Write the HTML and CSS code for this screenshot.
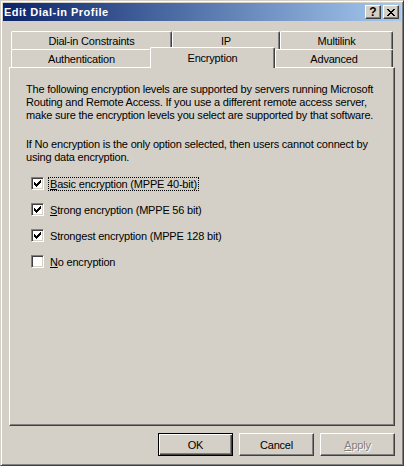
FILE: index.html
```html
<!DOCTYPE html>
<html lang="en">
<head>
    <meta charset="UTF-8">
    <title>Edit Dial-in Profile</title>
    <link rel="stylesheet" href="styles.css">
</head>
<body>

    <div class="window">
        <!-- Title bar -->
        <div class="titlebar">
            <span class="title">Edit Dial-in Profile</span>
            <div class="caption-buttons">
                <button class="caption-btn help-btn">?</button>
                <button class="caption-btn">
                    <svg width="8" height="7" viewBox="0 0 8 7" shape-rendering="crispEdges">
                        <path d="M0 0h2v1h1v1h2v-1h1v-1h2v1h-1v1h-1v1h-1v1h1v1h1v1h1v1h-2v-1h-1v-1h-2v1h-1v1h-2v-1h1v-1h1v-1h1v-1h-1v-1h-1v-1h-1z" fill="#000"/>
                    </svg>
                </button>
            </div>
        </div>

        <div class="dialog">
            <!-- Tabs, two rows -->
            <div class="tabs">
                <div class="tab-row">
                    <div class="tab tab-constraints">Dial-in Constraints</div>
                    <div class="tab tab-ip">IP</div>
                    <div class="tab tab-multilink">Multilink</div>
                </div>
                <div class="tab-row">
                    <div class="tab tab-auth">Authentication</div>
                    <div class="tab tab-encryption selected">Encryption</div>
                    <div class="tab tab-advanced">Advanced</div>
                </div>
            </div>

            <!-- Encryption page -->
            <div class="panel">
                <p class="info">The following encryption levels are supported by servers running Microsoft<br>Routing and Remote Access. If you use a different remote access server,<br>make sure the encryption levels you select are supported by that software.</p>
                <p class="info">If No encryption is the only option selected, then users cannot connect by<br>using data encryption.</p>

                <ul class="options">
                    <li class="option">
                        <span class="check checked"></span>
                        <span class="label focused"><u>B</u>asic encryption (MPPE 40-bit)</span>
                    </li>
                    <li class="option">
                        <span class="check checked"></span>
                        <span class="label"><u>S</u>trong encryption (MPPE 56 bit)</span>
                    </li>
                    <li class="option">
                        <span class="check checked"></span>
                        <span class="label">Strongest encryption (MPPE 128 bit)</span>
                    </li>
                    <li class="option">
                        <span class="check"></span>
                        <span class="label"><u>N</u>o encryption</span>
                    </li>
                </ul>
            </div>

            <!-- Dialog buttons -->
            <div class="buttons">
                <button class="btn default">OK</button>
                <button class="btn">Cancel</button>
                <button class="btn" disabled><u>A</u>pply</button>
            </div>
        </div>
    </div>

    <script>
        // classic 7x7 check mark, drawn into every checked box
        const checkMark = `
            <svg width="7" height="7" viewBox="0 0 7 7" shape-rendering="crispEdges">
                <path d="M6 0h1v3h-1v1h-1v1h-1v1h-1v1h-1v-1h-1v-1h-1v-3h1v1h1v1h1v-1h1v-1h1v-1h1z" fill="#000"/>
            </svg>`;

        document.querySelectorAll(".check.checked").forEach(function (box) {
            box.insertAdjacentHTML("beforeend", checkMark);
        });
    </script>

</body>
</html>
```

FILE: styles.css
```css
body {
    margin: 0;
    background-color: #d4d0c8;
    font-family: "Liberation Sans", Arial, sans-serif;
    font-size: 11px;
    letter-spacing: -0.2px;
    color: #000;
}
.window {
    width: 404px;
    height: 466px;
    box-sizing: border-box;
    display: flex;
    flex-direction: column;
    padding: 2px;
    border: 1px solid;
    border-color: #d4d0c8 #404040 #404040 #d4d0c8;
    box-shadow: inset 1px 1px #fff, inset -1px -1px #808080;
    background-color: #d4d0c8;
}
.titlebar {
    height: 18px;
    display: flex;
    align-items: center;
    justify-content: space-between;
    padding: 0 2px 0 1px;
    background: linear-gradient(to right, #0a246a, #a6caf0);
}
.title {
    color: #fff;
    font-weight: bold;
    letter-spacing: 0.5px;
}
.caption-buttons {
    display: flex;
    gap: 2px;
}
.caption-btn {
    width: 16px;
    height: 14px;
    box-sizing: border-box;
    padding: 0;
    display: flex;
    align-items: center;
    justify-content: center;
    background-color: #d4d0c8;
    border: 1px solid;
    border-color: #fff #404040 #404040 #fff;
    box-shadow: inset -1px -1px #808080;
    font-family: inherit;
}
.help-btn {
    font-size: 12px;
    font-weight: bold;
    line-height: 10px;
}
.dialog {
    flex: 1;
    display: flex;
    flex-direction: column;
    padding: 10px 6px 7px 6px;
}
.tabs {
    padding: 0 2px;
}
.tab-row {
    display: flex;
    height: 18px;
}
.tab {
    box-sizing: border-box;
    height: 18px;
    padding-top: 2px;
    line-height: 15px;
    text-align: center;
    border-left: 1px solid #fff;
    border-top: 1px solid #fff;
    border-right: 1px solid #404040;
    border-radius: 2px 2px 0 0;
    box-shadow: inset -1px 0 #808080;
}
.tab-constraints { width: 161px; }
.tab-ip { width: 108px; }
.tab-multilink { width: 113px; }
.tab-auth { width: 141px; }
.tab-encryption { width: 125px; }
.tab-advanced { width: 118px; }
.tab.selected {
    position: relative;
    z-index: 1;
    height: 21px;
    margin: -2px 0 -1px -2px;
    padding-top: 3px;
    background-color: #d4d0c8;
}
.panel {
    height: 359px;
    box-sizing: border-box;
    padding: 15px 16px 0 16px;
    border: 1px solid;
    border-color: #fff #404040 #404040 #fff;
    box-shadow: inset -1px -1px #808080;
}
.info {
    margin: 0 0 16px 0;
    line-height: 13px;
    white-space: nowrap;
}
.options {
    list-style: none;
    margin: -3px 0 0 0;
    padding: 0 0 0 5px;
    display: flex;
    flex-direction: column;
    gap: 12px;
}
.option {
    display: flex;
    align-items: flex-start;
    height: 14px;
}
.check {
    width: 13px;
    height: 13px;
    box-sizing: border-box;
    display: flex;
    align-items: center;
    justify-content: center;
    border: 1px solid;
    border-color: #808080 #fff #fff #808080;
    box-shadow: inset 1px 1px #404040, inset -1px -1px #d4d0c8;
    background-color: #fff;
}
.label {
    margin-left: 4px;
    padding: 0 1px;
    line-height: 12px;
    border: 1px dotted transparent;
}
.label.focused {
    border-color: #000;
}
.buttons {
    display: flex;
    justify-content: flex-end;
    gap: 6px;
    margin-top: 7px;
}
.btn {
    width: 75px;
    height: 23px;
    box-sizing: border-box;
    padding: 0;
    font-family: inherit;
    font-size: 11px;
    letter-spacing: inherit;
    color: #000;
    background-color: #d4d0c8;
    border: 1px solid;
    border-color: #fff #404040 #404040 #fff;
    box-shadow: inset -1px -1px #808080;
}
.btn.default {
    border-color: #000;
    box-shadow: inset 1px 1px #fff, inset -1px -1px #404040, inset -2px -2px #808080;
}
.btn:disabled {
    color: #808080;
    text-shadow: 1px 1px #fff;
}
```
